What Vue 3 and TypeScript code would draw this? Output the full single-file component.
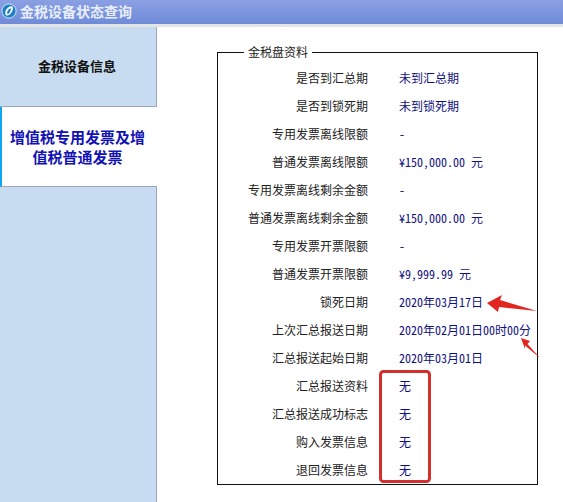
<script setup lang="ts">
const rows: { label: string; value: string }[] = [
  { label: '是否到汇总期', value: '未到汇总期' },
  { label: '是否到锁死期', value: '未到锁死期' },
  { label: '专用发票离线限额', value: '-' },
  { label: '普通发票离线限额', value: '¥150,000.00 元' },
  { label: '专用发票离线剩余金额', value: '-' },
  { label: '普通发票离线剩余金额', value: '¥150,000.00 元' },
  { label: '专用发票开票限额', value: '-' },
  { label: '普通发票开票限额', value: '¥9,999.99 元' },
  { label: '锁死日期', value: '2020年03月17日' },
  { label: '上次汇总报送日期', value: '2020年02月01日00时00分' },
  { label: '汇总报送起始日期', value: '2020年03月01日' },
  { label: '汇总报送资料', value: '无' },
  { label: '汇总报送成功标志', value: '无' },
  { label: '购入发票信息', value: '无' },
  { label: '退回发票信息', value: '无' },
]
</script>

<template>
  <div class="window">
    <header class="titlebar">
      <svg class="logo" width="16" height="16" viewBox="0 0 18 18">
        <circle cx="9" cy="9" r="8" fill="#1f7fc4" />
        <circle cx="9" cy="9" r="8" fill="none" stroke="#dff1fb" stroke-width="1" />
        <path d="M12.5 3.5 C8 3.5 4.5 8 4.8 12 C5 14.5 8 15 10.5 12.5 C13 10 14.5 6 12.5 3.5 Z M11 6 C11.5 8 10 11 8.5 12 C7.2 12.8 6.8 12 7 10.5 C7.3 8.5 9 6.3 11 6 Z" fill="#f4fbff" />
      </svg>
      <span class="title">金税设备状态查询</span>
    </header>
    <div class="strip"></div>
    <div class="body">
      <nav class="sidebar">
        <div class="tab">金税设备信息</div>
        <div class="tab active">增值税专用发票及增值税普通发票</div>
      </nav>
      <main class="content">
        <fieldset class="panel">
          <legend class="legend">金税盘资料</legend>
          <div v-for="row in rows" :key="row.label" class="row">
            <span class="label">{{ row.label }}</span>
            <span class="value">{{ row.value }}</span>
          </div>
        </fieldset>
      </main>
    </div>

    <svg class="marks" width="563" height="502" viewBox="0 0 563 502">
      <path d="M487 303 L502 295 L500 300 L537 311 L499 307 L498 312 Z" fill="#e2261f" />
      <path d="M521 338 L530 341 L527.5 344 L540 358 L525 345.5 L525 349 Z" fill="#e2261f" />
      <rect x="380.5" y="371.5" width="49" height="110" rx="3" fill="none" stroke="#d2302e" stroke-width="3" />
    </svg>
  </div>
</template>

<style>
html, body { margin: 0; padding: 0; background: #fff; }
</style>

<style scoped>
.window {
  position: relative;
  width: 563px;
  height: 502px;
  overflow: hidden;
  background: #fff;
  font-family: "Noto Sans CJK SC", "Liberation Sans", sans-serif;
  font-size: 12px;
  color: #111;
}
.titlebar {
  display: flex;
  align-items: center;
  gap: 3px;
  height: 24px;
  padding: 0 0 3px 1px;
  box-sizing: border-box;
  background: linear-gradient(#8aa0e2, #6f8bd8);
}
.logo { flex: none; }
.title {
  color: #e8eefb;
  font-size: 14px;
  font-weight: 700;
}
.strip { height: 3px; background: #e4e4e2; }
.body { display: flex; height: 475px; }
.sidebar {
  width: 157px;
  flex: none;
  box-sizing: border-box;
  background: #c7dcf0;
  border-right: 1px solid #9aa8b8;
}
.tab {
  display: flex;
  align-items: center;
  justify-content: center;
  height: 80px;
  padding: 0 2px 3px 0;
  box-sizing: border-box;
  border-bottom: 1px solid #9aa8b8;
  color: #111;
  font-size: 13px;
  font-weight: 700;
  text-align: center;
}
.tab.active {
  width: 157px;
  padding: 0 8px 0 4px;
  background: #fff;
  border-left: 2px solid #12a4f0;
  color: #1212b4;
  font-size: 15px;
  line-height: 20px;
}
.content { flex: 1; min-width: 0; padding: 18px 0 0 60px; }
.panel {
  width: 321px;
  height: 440px;
  margin: 0;
  padding: 4px 0 0;
  box-sizing: border-box;
  border: 1px solid #111;
}
.legend {
  margin-left: 26px;
  padding: 0 4px 0 4px;
  font-size: 12px;
  line-height: 14px;
  color: #222;
}
.row { display: flex; align-items: center; height: 28px; }
.label {
  width: 150px;
  flex: none;
  text-align: right;
  color: #222;
}
.value {
  margin-left: 31px;
  color: #101080;
  white-space: nowrap;
  font-feature-settings: "hwid";
}
.marks { position: absolute; left: 0; top: 0; pointer-events: none; }
</style>
